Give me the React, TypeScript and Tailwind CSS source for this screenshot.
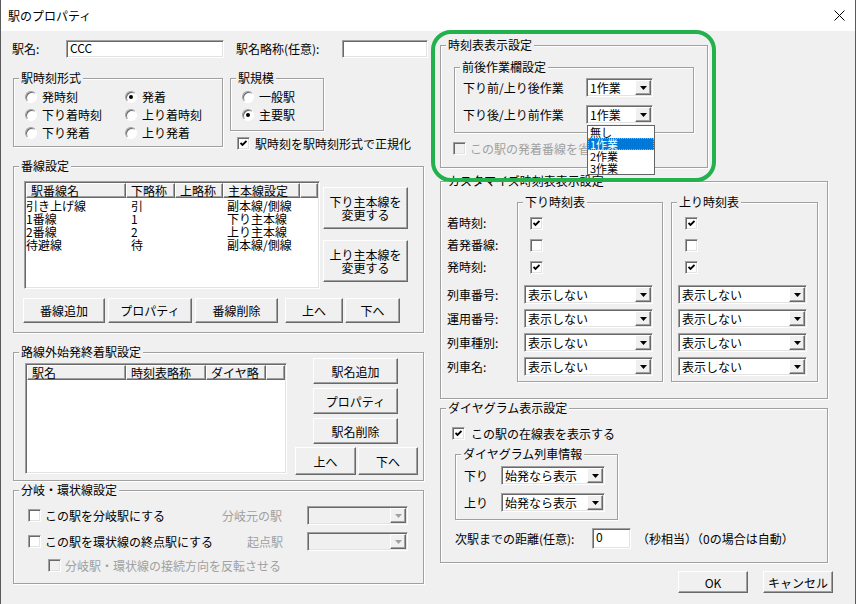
import React from "react";

const sunken =
  "border border-t-[#a0a0a0] border-l-[#a0a0a0] border-b-white border-r-white shadow-[inset_1px_1px_0_#696969,inset_-1px_-1px_0_#e3e3e3]";
const raised =
  "border border-t-white border-l-white border-b-[#696969] border-r-[#696969] shadow-[inset_-1px_-1px_0_#a0a0a0]";

function Group({
  label,
  className = "",
  children,
}: {
  label: string;
  className?: string;
  children?: React.ReactNode;
}) {
  return (
    <div
      className={`relative shrink-0 border border-[#a0a0a0] shadow-[inset_1px_1px_0_#fff,1px_1px_0_#fff] ${className}`}
    >
      <span className="absolute left-[5px] top-[-8px] whitespace-nowrap bg-[#f0f0f0] px-[2px] leading-[14px]">
        {label}
      </span>
      {children}
    </div>
  );
}

function Check({ checked = false, disabled = false }: { checked?: boolean; disabled?: boolean }) {
  return (
    <span
      className={`flex h-[13px] w-[13px] shrink-0 items-center justify-center ${sunken} ${
        disabled ? "bg-[#f0f0f0]" : "bg-white"
      }`}
    >
      {checked && (
        <svg width="7" height="7" viewBox="0 0 7 7">
          <polyline points="0.5,3 2.5,5 6.5,1" fill="none" stroke="#000" strokeWidth="1.8" />
        </svg>
      )}
    </span>
  );
}

function Radio({ checked = false }: { checked?: boolean }) {
  return (
    <span className="flex h-[12px] w-[12px] shrink-0 items-center justify-center rounded-full border border-t-[#a0a0a0] border-l-[#a0a0a0] border-b-white border-r-white bg-white shadow-[inset_1px_1px_0_#696969]">
      {checked && <span className="h-[4px] w-[4px] rounded-full bg-black" />}
    </span>
  );
}

function Select({
  value = "",
  className = "",
  disabled = false,
}: {
  value?: string;
  className?: string;
  disabled?: boolean;
}) {
  return (
    <div
      className={`flex shrink-0 items-stretch p-[1px] ${sunken} ${disabled ? "bg-[#f0f0f0]" : "bg-white"} ${className}`}
    >
      <span className="flex-1 overflow-hidden whitespace-nowrap pl-[2px] leading-[15px]">{value}</span>
      <span className={`flex w-[16px] items-center justify-center bg-[#f0f0f0] ${raised}`}>
        <svg width="7" height="4" viewBox="0 0 7 4">
          <path d="M0 0H7L3.5 4Z" fill={disabled ? "#a0a0a0" : "#000"} />
        </svg>
      </span>
    </div>
  );
}

function Btn({ children, className = "" }: { children: React.ReactNode; className?: string }) {
  return (
    <div
      className={`flex shrink-0 items-center justify-center whitespace-nowrap bg-[#f0f0f0] text-center leading-[13px] ${raised} ${className}`}
    >
      {children}
    </div>
  );
}

function Input({ value = "", className = "" }: { value?: string; className?: string }) {
  return <div className={`shrink-0 bg-white pl-[3px] leading-[14px] ${sunken} ${className}`}>{value}</div>;
}

type Col = { label: string; w: string; pl: string };

function ListView({
  cols,
  rows,
  className = "",
}: {
  cols: Col[];
  rows: string[][];
  className?: string;
}) {
  return (
    <div className={`flex shrink-0 flex-col overflow-hidden bg-white p-[1px] ${sunken} ${className}`}>
      <div className="flex h-[15px] shrink-0">
        {cols.map((c, i) => (
          <div
            key={i}
            className={`h-full shrink-0 overflow-hidden whitespace-nowrap bg-[#f0f0f0] pl-[4px] leading-[13px] ${raised} ${c.w}`}
          >
            {c.label}
          </div>
        ))}
        <div className={`h-full flex-1 bg-[#f0f0f0] ${raised}`} />
      </div>
      <div className="flex flex-col pt-[1px]">
        {rows.map((r, i) => (
          <div key={i} className="flex h-[13px] leading-[13px]">
            {r.map((cell, j) => (
              <div key={j} className={`shrink-0 whitespace-nowrap ${cols[j].w} ${cols[j].pl}`}>
                {cell}
              </div>
            ))}
          </div>
        ))}
      </div>
    </div>
  );
}

function TimetableCol({ cbClass, checks }: { cbClass: string; checks: boolean[] }) {
  return (
    <div className="flex flex-col pl-[6px] pt-[9px]">
      {checks.map((c, i) => (
        <div key={i} className="flex h-[22px] items-center">
          <span className={cbClass}>
            <Check checked={c} />
          </span>
        </div>
      ))}
      <div className="mt-[7px] flex flex-col gap-[5px]">
        {[0, 1, 2, 3].map((i) => (
          <Select key={i} value="表示しない" className="h-[19px] w-[129px]" />
        ))}
      </div>
    </div>
  );
}

export default function App() {
  return (
    <div className="relative h-[604px] w-[856px] overflow-hidden border-l border-r border-[#5a5a5a] bg-[#f0f0f0] font-['Noto_Sans_CJK_JP',sans-serif] text-[12px] leading-[14px] text-black">
      {/* title bar */}
      <div className="flex h-[31px] items-center justify-between bg-white pl-[7px] pr-[10px]">
        <span>駅のプロパティ</span>
        <svg width="11" height="11" viewBox="0 0 11 11">
          <path d="M0.5 0.5L10.5 10.5M10.5 0.5L0.5 10.5" stroke="#000" strokeWidth="1" />
        </svg>
      </div>

      <div className="flex">
        {/* LEFT COLUMN */}
        <div className="flex w-[439px] shrink-0 flex-col pl-[11px]">
          <div className="mt-[9px] flex h-[18px] items-center">
            <span className="w-[54px] shrink-0">駅名:</span>
            <Input value="CCC" className="h-[18px] w-[158px]" />
            <span className="ml-[12px] w-[106px] shrink-0">駅名略称(任意):</span>
            <Input className="h-[18px] w-[86px]" />
          </div>

          <div className="ml-[1px] mt-[20px] flex items-start">
            <Group label="駅時刻形式" className="h-[69px] w-[210px]">
              <div className="grid grid-cols-[100px_100px] gap-y-[6px] pl-[11px] pt-[12px]">
                {[
                  ["発時刻", false],
                  ["発着", true],
                  ["下り着時刻", false],
                  ["上り着時刻", false],
                  ["下り発着", false],
                  ["上り発着", false],
                ].map(([l, c], i) => (
                  <div key={i} className="flex h-[12px] items-center gap-[5px]">
                    <Radio checked={c as boolean} />
                    <span className="whitespace-nowrap">{l as string}</span>
                  </div>
                ))}
              </div>
            </Group>
            <div className="ml-[7px] flex flex-col">
              <Group label="駅規模" className="h-[53px] w-[94px]">
                <div className="flex flex-col gap-[6px] pl-[11px] pt-[12px]">
                  <div className="flex h-[12px] items-center gap-[5px]">
                    <Radio />
                    <span>一般駅</span>
                  </div>
                  <div className="flex h-[12px] items-center gap-[5px]">
                    <Radio checked />
                    <span>主要駅</span>
                  </div>
                </div>
              </Group>
              <div className="ml-[7px] mt-[6px] flex h-[13px] items-center gap-[5px]">
                <Check checked />
                <span className="whitespace-nowrap">駅時刻を駅時刻形式で正規化</span>
              </div>
            </div>
          </div>

          <Group label="番線設定" className="ml-[1px] mt-[16px] h-[167px] w-[411px]">
            <div className="flex">
              <ListView
                className="ml-[10px] mt-[14px] h-[108px] w-[296px]"
                cols={[
                  { label: "駅番線名", w: "w-[100px]", pl: "pl-[0px]" },
                  { label: "下略称", w: "w-[49px]", pl: "pl-[5px]" },
                  { label: "上略称", w: "w-[48px]", pl: "pl-[5px]" },
                  { label: "主本線設定", w: "w-[77px]", pl: "pl-[4px]" },
                ]}
                rows={[
                  ["引き上げ線", "引", "", "副本線/側線"],
                  ["1番線", "1", "", "下り主本線"],
                  ["2番線", "2", "", "上り主本線"],
                  ["待避線", "待", "", "副本線/側線"],
                ]}
              />
              <div className="ml-[3px] flex flex-col">
                <Btn className="mt-[20px] h-[42px] w-[85px]">
                  下り主本線を
                  <br />
                  変更する
                </Btn>
                <Btn className="mt-[11px] h-[42px] w-[85px]">
                  上り主本線を
                  <br />
                  変更する
                </Btn>
              </div>
            </div>
            <div className="ml-[9px] mt-[9px] flex">
              <Btn className="h-[25px] w-[82px]">番線追加</Btn>
              <Btn className="ml-[3px] h-[25px] w-[84px]">プロパティ</Btn>
              <Btn className="ml-[3px] h-[25px] w-[83px]">番線削除</Btn>
              <Btn className="ml-[7px] h-[25px] w-[58px]">上へ</Btn>
              <Btn className="ml-[2px] h-[25px] w-[55px]">下へ</Btn>
            </div>
          </Group>

          <Group label="路線外始発終着駅設定" className="ml-[1px] mt-[19px] h-[129px] w-[411px]">
            <div className="flex">
              <ListView
                className="ml-[11px] mt-[10px] h-[111px] w-[262px]"
                cols={[
                  { label: "駅名", w: "w-[99px]", pl: "pl-[0px]" },
                  { label: "時刻表略称", w: "w-[80px]", pl: "pl-[5px]" },
                  { label: "ダイヤ略", w: "w-[60px]", pl: "pl-[5px]" },
                ]}
                rows={[]}
              />
              <div className="ml-[8px] flex flex-col">
                <Btn className="ml-[18px] mt-[5px] h-[26px] w-[85px]">駅名追加</Btn>
                <Btn className="ml-[18px] mt-[4px] h-[26px] w-[85px]">プロパティ</Btn>
                <Btn className="ml-[18px] mt-[4px] h-[26px] w-[85px]">駅名削除</Btn>
                <div className="mt-[3px] flex">
                  <Btn className="h-[28px] w-[61px]">上へ</Btn>
                  <Btn className="ml-[2px] h-[28px] w-[60px]">下へ</Btn>
                </div>
              </div>
            </div>
          </Group>

          <Group label="分岐・環状線設定" className="ml-[1px] mt-[9px] h-[94px] w-[411px]">
            <div className="flex flex-col pl-[14px] pt-[15px]">
              <div className="flex h-[19px] items-center">
                <Check />
                <span className="ml-[4px] w-[177px] whitespace-nowrap">この駅を分岐駅にする</span>
                <span className="w-[85px] text-[#a0a0a0]">分岐元の駅</span>
                <Select disabled className="h-[19px] w-[101px]" />
              </div>
              <div className="mt-[7px] flex h-[19px] items-center">
                <Check />
                <span className="ml-[4px] w-[202px] whitespace-nowrap">この駅を環状線の終点駅にする</span>
                <span className="w-[60px] text-[#a0a0a0]">起点駅</span>
                <Select disabled className="h-[19px] w-[101px]" />
              </div>
              <div className="ml-[20px] mt-[8px] flex h-[13px] items-center">
                <Check disabled />
                <span className="ml-[4px] whitespace-nowrap text-[#a0a0a0]">分岐駅・環状線の接続方向を反転させる</span>
              </div>
            </div>
          </Group>
        </div>

        {/* RIGHT COLUMN */}
        <div className="flex w-[390px] shrink-0 flex-col">
          <Group label="時刻表表示設定" className="mt-[14px] h-[123px] w-[268px]">
            <Group label="前後作業欄設定" className="ml-[13px] mt-[21px] h-[66px] w-[240px]">
              <div className="flex flex-col gap-[8px] pl-[8px] pt-[10px]">
                <div className="flex h-[19px] items-center">
                  <span className="w-[123px] shrink-0 whitespace-nowrap">下り前/上り後作業</span>
                  <Select value="1作業" className="h-[19px] w-[67px]" />
                </div>
                <div className="flex h-[19px] items-center">
                  <span className="w-[123px] shrink-0 whitespace-nowrap">下り後/上り前作業</span>
                  <Select value="1作業" className="h-[19px] w-[67px]" />
                </div>
              </div>
            </Group>
            <div className="ml-[12px] mt-[9px] flex h-[13px] items-center gap-[4px] text-[#a0a0a0]">
              <Check disabled />
              <span className="whitespace-nowrap">この駅の発着番線を省略する</span>
            </div>
          </Group>

          <Group label="カスタマイズ時刻表表示設定" className="mt-[13px] h-[218px] w-[388px]">
            <div className="flex items-start">
              <div className="ml-[6px] mt-[30px] flex w-[70px] shrink-0 flex-col">
                {["着時刻:", "着発番線:", "発時刻:"].map((l) => (
                  <div key={l} className="flex h-[22px] items-center whitespace-nowrap">
                    {l}
                  </div>
                ))}
                <div className="mt-[7px] flex flex-col gap-[5px]">
                  {["列車番号:", "運用番号:", "列車種別:", "列車名:"].map((l) => (
                    <div key={l} className="flex h-[19px] items-center whitespace-nowrap">
                      {l}
                    </div>
                  ))}
                </div>
              </div>
              <Group label="下り時刻表" className="mt-[20px] h-[180px] w-[146px]">
                <TimetableCol cbClass="ml-[6px]" checks={[true, false, true]} />
              </Group>
              <Group label="上り時刻表" className="ml-[8px] mt-[20px] h-[180px] w-[147px]">
                <TimetableCol cbClass="ml-[7px]" checks={[true, false, true]} />
              </Group>
            </div>
          </Group>

          <Group label="ダイヤグラム表示設定" className="mt-[9px] h-[155px] w-[388px]">
            <div className="ml-[11px] mt-[18px] flex h-[13px] items-center gap-[6px]">
              <Check checked />
              <span className="whitespace-nowrap">この駅の在線表を表示する</span>
            </div>
            <Group label="ダイヤグラム列車情報" className="ml-[14px] mt-[14px] h-[66px] w-[163px]">
              <div className="flex flex-col gap-[8px] pl-[8px] pt-[11px]">
                <div className="flex h-[19px] items-center">
                  <span className="w-[37px] shrink-0">下り</span>
                  <Select value="始発なら表示" className="h-[19px] w-[104px]" />
                </div>
                <div className="flex h-[19px] items-center">
                  <span className="w-[37px] shrink-0">上り</span>
                  <Select value="始発なら表示" className="h-[19px] w-[104px]" />
                </div>
              </div>
            </Group>
            <div className="ml-[14px] mt-[8px] flex h-[21px] items-center">
              <span className="w-[137px] shrink-0 whitespace-nowrap">次駅までの距離(任意):</span>
              <Input value="0" className="h-[21px] w-[39px] pt-[1px]" />
              <span className="ml-[6px] whitespace-nowrap">（秒相当）（0の場合は自動）</span>
            </div>
          </Group>

          <div className="ml-[238px] mt-[8px] flex">
            <Btn className="h-[22px] w-[70px]">OK</Btn>
            <Btn className="ml-[15px] h-[22px] w-[70px]">キャンセル</Btn>
          </div>
        </div>
      </div>

      {/* open dropdown list */}
      <div className="absolute left-[586px] top-[125px] flex h-[50px] w-[68px] flex-col border border-[#646464] bg-white text-[11px]">
        <div className="h-[12px] pl-[2px] leading-[12px]">無し</div>
        <div className="h-[12px] bg-[#0078d7] pl-[2px] leading-[12px] text-white outline-1 outline-offset-[-1px] outline-dotted outline-[#ff9a2e]">
          1作業
        </div>
        <div className="h-[12px] pl-[2px] leading-[12px]">2作業</div>
        <div className="h-[12px] pl-[2px] leading-[12px]">3作業</div>
      </div>

      {/* green highlight annotation */}
      <div className="pointer-events-none absolute left-[430px] top-[30px] h-[152px] w-[285px] rounded-[20px] border-[4px] border-[#22b14c]" />
    </div>
  );
}
